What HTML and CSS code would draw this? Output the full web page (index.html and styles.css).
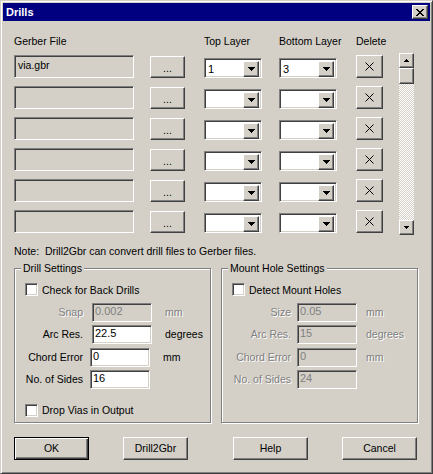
FILE: index.html
```html
<!DOCTYPE html>
<html>
<head>
<meta charset="utf-8">
<link rel="stylesheet" href="styles.css">
</head>
<body>
<div class="window">
  <div class="titlebar">
    <span class="title">Drills</span>
    <span class="close btn-raised"><svg width="8" height="7" viewBox="0 0 8 7"><path d="M0 0h2v1H0zM6 0h2v1H6zM1 1h2v1H1zM5 1h2v1H5zM2 2h4v1H2zM3 3h2v1H3zM2 4h4v1H2zM1 5h2v1H1zM5 5h2v1H5zM0 6h2v1H0zM6 6h2v1H6z" fill="#000"/></svg></span>
  </div>
  <div class="content">
    <div class="files">
      <div class="grid">
        <div class="hdr">Gerber File</div><div></div><div class="hdr">Top Layer</div><div class="hdr">Bottom Layer</div><div class="hdr">Delete</div>

        <div class="field sunken">via.gbr</div><div class="browse btn-raised">...</div>
        <div class="combo sunken"><span class="cval">1</span><span class="drop btn-raised"><svg width="7" height="4" viewBox="0 0 7 4"><path d="M0 0h7v1H0zM1 1h5v1H1zM2 2h3v1H2zM3 3h1v1H3z" fill="#000"/></svg></span></div>
        <div class="combo sunken"><span class="cval">3</span><span class="drop btn-raised"><svg width="7" height="4" viewBox="0 0 7 4"><path d="M0 0h7v1H0zM1 1h5v1H1zM2 2h3v1H2zM3 3h1v1H3z" fill="#000"/></svg></span></div>
        <div class="del btn-raised"><svg width="9" height="9" viewBox="0 0 9 9"><path d="M0.5 0.5L8.5 8.5M8.5 0.5L0.5 8.5" stroke="#000" stroke-width="1"/></svg></div>

        <div class="field sunken"></div><div class="browse btn-raised">...</div>
        <div class="combo sunken"><span class="cval"></span><span class="drop btn-raised"><svg width="7" height="4" viewBox="0 0 7 4"><path d="M0 0h7v1H0zM1 1h5v1H1zM2 2h3v1H2zM3 3h1v1H3z" fill="#000"/></svg></span></div>
        <div class="combo sunken"><span class="cval"></span><span class="drop btn-raised"><svg width="7" height="4" viewBox="0 0 7 4"><path d="M0 0h7v1H0zM1 1h5v1H1zM2 2h3v1H2zM3 3h1v1H3z" fill="#000"/></svg></span></div>
        <div class="del btn-raised"><svg width="9" height="9" viewBox="0 0 9 9"><path d="M0.5 0.5L8.5 8.5M8.5 0.5L0.5 8.5" stroke="#000" stroke-width="1"/></svg></div>

        <div class="field sunken"></div><div class="browse btn-raised">...</div>
        <div class="combo sunken"><span class="cval"></span><span class="drop btn-raised"><svg width="7" height="4" viewBox="0 0 7 4"><path d="M0 0h7v1H0zM1 1h5v1H1zM2 2h3v1H2zM3 3h1v1H3z" fill="#000"/></svg></span></div>
        <div class="combo sunken"><span class="cval"></span><span class="drop btn-raised"><svg width="7" height="4" viewBox="0 0 7 4"><path d="M0 0h7v1H0zM1 1h5v1H1zM2 2h3v1H2zM3 3h1v1H3z" fill="#000"/></svg></span></div>
        <div class="del btn-raised"><svg width="9" height="9" viewBox="0 0 9 9"><path d="M0.5 0.5L8.5 8.5M8.5 0.5L0.5 8.5" stroke="#000" stroke-width="1"/></svg></div>

        <div class="field sunken"></div><div class="browse btn-raised">...</div>
        <div class="combo sunken"><span class="cval"></span><span class="drop btn-raised"><svg width="7" height="4" viewBox="0 0 7 4"><path d="M0 0h7v1H0zM1 1h5v1H1zM2 2h3v1H2zM3 3h1v1H3z" fill="#000"/></svg></span></div>
        <div class="combo sunken"><span class="cval"></span><span class="drop btn-raised"><svg width="7" height="4" viewBox="0 0 7 4"><path d="M0 0h7v1H0zM1 1h5v1H1zM2 2h3v1H2zM3 3h1v1H3z" fill="#000"/></svg></span></div>
        <div class="del btn-raised"><svg width="9" height="9" viewBox="0 0 9 9"><path d="M0.5 0.5L8.5 8.5M8.5 0.5L0.5 8.5" stroke="#000" stroke-width="1"/></svg></div>

        <div class="field sunken"></div><div class="browse btn-raised">...</div>
        <div class="combo sunken"><span class="cval"></span><span class="drop btn-raised"><svg width="7" height="4" viewBox="0 0 7 4"><path d="M0 0h7v1H0zM1 1h5v1H1zM2 2h3v1H2zM3 3h1v1H3z" fill="#000"/></svg></span></div>
        <div class="combo sunken"><span class="cval"></span><span class="drop btn-raised"><svg width="7" height="4" viewBox="0 0 7 4"><path d="M0 0h7v1H0zM1 1h5v1H1zM2 2h3v1H2zM3 3h1v1H3z" fill="#000"/></svg></span></div>
        <div class="del btn-raised"><svg width="9" height="9" viewBox="0 0 9 9"><path d="M0.5 0.5L8.5 8.5M8.5 0.5L0.5 8.5" stroke="#000" stroke-width="1"/></svg></div>

        <div class="field sunken"></div><div class="browse btn-raised">...</div>
        <div class="combo sunken"><span class="cval"></span><span class="drop btn-raised"><svg width="7" height="4" viewBox="0 0 7 4"><path d="M0 0h7v1H0zM1 1h5v1H1zM2 2h3v1H2zM3 3h1v1H3z" fill="#000"/></svg></span></div>
        <div class="combo sunken"><span class="cval"></span><span class="drop btn-raised"><svg width="7" height="4" viewBox="0 0 7 4"><path d="M0 0h7v1H0zM1 1h5v1H1zM2 2h3v1H2zM3 3h1v1H3z" fill="#000"/></svg></span></div>
        <div class="del btn-raised"><svg width="9" height="9" viewBox="0 0 9 9"><path d="M0.5 0.5L8.5 8.5M8.5 0.5L0.5 8.5" stroke="#000" stroke-width="1"/></svg></div>
      </div>
      <div class="vscroll">
        <div class="sbtn btn-raised"><svg width="5" height="3" viewBox="0 0 5 3"><path d="M2 0h1v1H2zM1 1h3v1H1zM0 2h5v1H0z" fill="#000"/></svg></div>
        <div class="thumb btn-raised"></div>
        <div class="track"></div>
        <div class="sbtn btn-raised"><svg width="5" height="3" viewBox="0 0 5 3"><path d="M0 0h5v1H0zM1 1h3v1H1zM2 2h1v1H2z" fill="#000"/></svg></div>
      </div>
    </div>

    <div class="note">Note:&nbsp; Drill2Gbr can convert drill files to Gerber files.</div>

    <div class="groups">
      <fieldset class="group drill">
        <legend>Drill Settings</legend>
        <div class="check"><span class="box sunken"></span><span>Check for Back Drills</span></div>
        <div class="form">
          <div class="frow"><span class="lbl disabled">Snap</span><span class="num sunken off">0.002</span><span class="unit disabled">mm</span></div>
          <div class="frow"><span class="lbl">Arc Res.</span><span class="num sunken">22.5</span><span class="unit">degrees</span></div>
          <div class="frow"><span class="lbl">Chord Error</span><span class="num sunken shift">0</span><span class="unit">mm</span></div>
          <div class="frow"><span class="lbl">No. of Sides</span><span class="num sunken shift">16</span></div>
        </div>
        <div class="check drop-vias"><span class="box sunken"></span><span>Drop Vias in Output</span></div>
      </fieldset>
      <fieldset class="group mount">
        <legend>Mount Hole Settings</legend>
        <div class="check"><span class="box sunken"></span><span>Detect Mount Holes</span></div>
        <div class="form">
          <div class="frow"><span class="lbl disabled">Size</span><span class="num sunken off">0.05</span><span class="unit disabled">mm</span></div>
          <div class="frow"><span class="lbl disabled">Arc Res.</span><span class="num sunken off">15</span><span class="unit disabled">degrees</span></div>
          <div class="frow"><span class="lbl disabled">Chord Error</span><span class="num sunken off">0</span><span class="unit disabled">mm</span></div>
          <div class="frow"><span class="lbl disabled">No. of Sides</span><span class="num sunken off">24</span></div>
        </div>
      </fieldset>
    </div>

    <div class="buttons">
      <div class="pbtn default btn-raised">OK</div>
      <div class="pbtn narrow btn-raised">Drill2Gbr</div>
      <div class="pbtn btn-raised">Help</div>
      <div class="pbtn btn-raised">Cancel</div>
    </div>
  </div>
</div>
</body>
</html>
```
FILE: styles.css
```css
* { box-sizing: border-box; }
html, body { margin: 0; padding: 0; background: #d4d0c8; }
body {
  font-family: "Liberation Sans", Arial, sans-serif;
  font-size: 10.5px;
  color: #000;
}
.window {
  width: 433px;
  height: 474px;
  background: #d4d0c8;
  border: 1px solid;
  border-color: #d4d0c8 #404040 #404040 #d4d0c8;
  box-shadow: inset 1px 1px #fff, inset -1px -1px #808080;
  padding: 2px;
}
.titlebar {
  height: 18px;
  background: #000080;
  display: flex;
  align-items: center;
  justify-content: space-between;
  padding: 0 2px 0 3px;
}
.title {
  color: #fff;
  font-weight: bold;
  font-size: 11px;
  line-height: 18px;
}
.btn-raised {
  background: #d4d0c8;
  border: 1px solid;
  border-color: #fff #404040 #404040 #fff;
  box-shadow: inset -1px -1px #808080;
  display: flex;
  align-items: center;
  justify-content: center;
}
.sunken {
  border: 1px solid;
  border-color: #808080 #fff #fff #808080;
  box-shadow: inset 1px 1px #404040, inset -1px -1px #d4d0c8;
  background: #fff;
}
.close {
  width: 16px;
  height: 14px;
}
.content { padding-left: 11px; }
.files { display: flex; margin-top: 14px; }
.grid {
  display: grid;
  grid-template-columns: 136px 54px 75px 77px 27px;
  grid-template-rows: 13px repeat(6, 24px);
  row-gap: 7px;
  align-items: start;
}
.hdr { line-height: 13px; white-space: nowrap; }
.field {
  width: 120px;
  height: 23px;
  background: #d4d0c8;
  padding: 0 3px;
  line-height: 19px;
}
.browse {
  width: 35px;
  height: 22px;
  margin-top: 1px;
  line-height: 1;
  padding-top: 3px;
}
.combo {
  width: 58px;
  height: 20px;
  margin-top: 3px;
  display: flex;
  padding: 2px;
}
.cval { flex: 1; line-height: 16px; padding-left: 1px; font-size: 11px; }
.drop { width: 16px; height: 16px; flex: none; }
.del { width: 27px; height: 23px; }
.vscroll {
  margin-left: 16px;
  margin-top: 18px;
  width: 15px;
  height: 182px;
  display: flex;
  flex-direction: column;
}
.sbtn { height: 15px; flex: none; }
.thumb { height: 16px; flex: none; }
.track {
  flex: 1;
  background: repeating-conic-gradient(#fff 0 25%, #d4d0c8 0 50%) 0 0 / 2px 2px;
}
.note { margin-top: 10px; line-height: 13px; }
.groups { display: flex; gap: 10px; margin-top: 4px; }
.group {
  margin: 0;
  padding: 0 0 0 10px;
  width: 197px;
  height: 161px;
  border: 1px solid #808080;
  box-shadow: inset 1px 1px #fff, 1px 1px #fff;
  min-width: 0;
}
.group legend {
  margin-left: -4px;
  padding: 0 2px;
  line-height: 13px;
  background: #d4d0c8;
}
.check {
  display: flex;
  align-items: center;
  height: 13px;
  margin-top: 8px;
}
.box { width: 13px; height: 13px; flex: none; margin-right: 4px; }
.form {
  display: grid;
  grid-auto-rows: 19px;
  row-gap: 3.34px;
  margin-top: 7px;
}
.frow { display: flex; align-items: center; }
.lbl { text-align: right; line-height: 19px; white-space: nowrap; }
.drill .lbl { width: 58px; }
.mount .lbl { width: 59px; }
.num {
  width: 60px;
  height: 19px;
  line-height: 15px;
  padding-left: 2px;
  font-size: 11px;
}
.drill .num { margin-left: 9px; }
.drill .num.shift { margin-left: 7px; }
.mount .num { margin-left: 6px; }
.num.off { background: #d4d0c8; color: #808080; }
.unit { margin-left: 13px; line-height: 19px; }
.mount .unit { margin-left: 9px; }
.disabled { color: #808080; text-shadow: 1px 1px 0 #fff; }
.drop-vias { margin-top: 15px; }
.buttons {
  display: grid;
  grid-template-columns: 109px 110px 109px 75px;
  margin-top: 14px;
  justify-items: start;
}
.pbtn { width: 75px; height: 23px; line-height: 1; }
.pbtn.narrow { width: 65px; }
.pbtn.default {
  border: 1px solid #000;
  box-shadow: inset 1px 1px #fff, inset -1px -1px #404040, inset -2px -2px #808080;
}
```
